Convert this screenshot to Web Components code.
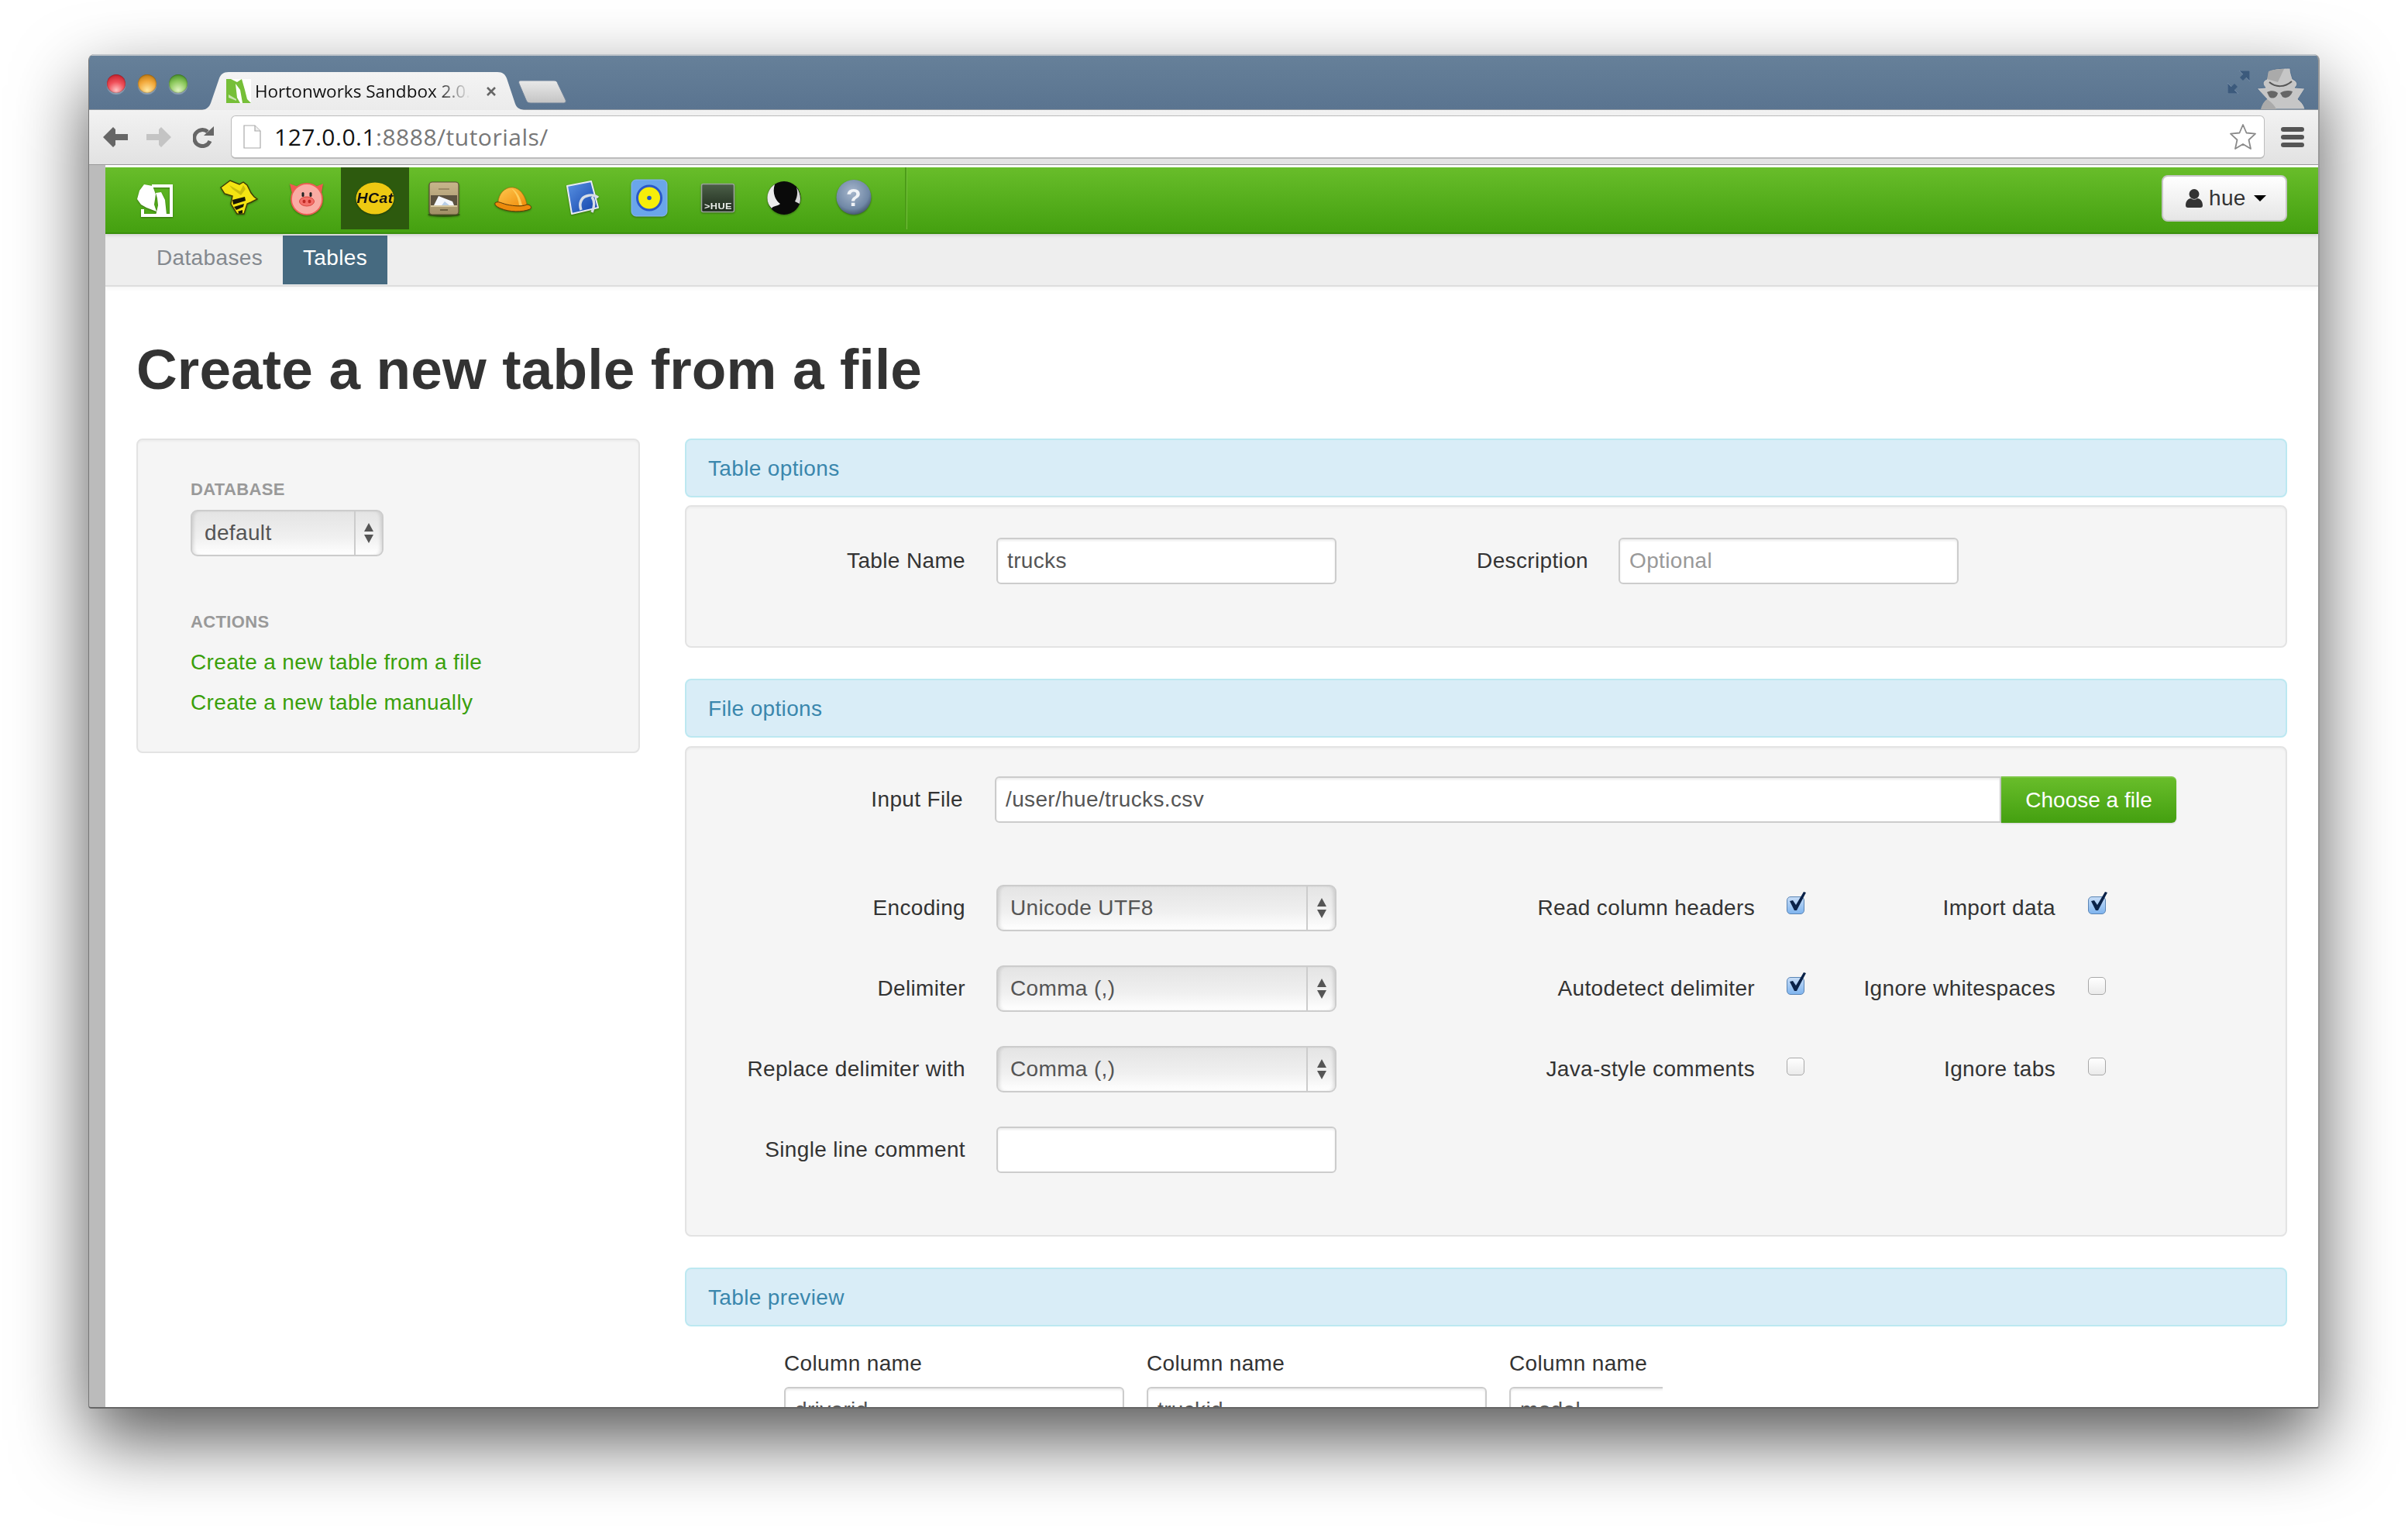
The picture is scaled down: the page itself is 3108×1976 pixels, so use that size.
<!DOCTYPE html>
<html>
<head>
<meta charset="utf-8">
<title>Hortonworks Sandbox 2.0</title>
<style>
    html, body { margin: 0; background: #fff; }
    body { box-sizing: border-box; min-height: 1976px; padding: 70px 114px; font-family: "Liberation Sans", Arial, sans-serif; font-size: 28px; letter-spacing: .35px; color: #333; }
</style>
</head>
<body>
<browser-window>
    <browser-tabstrip title="Hortonworks Sandbox 2.0."></browser-tabstrip>
    <browser-toolbar host="127.0.0.1" path=":8888/tutorials/"></browser-toolbar>
    <hue-page>
        <hue-navbar user="hue"></hue-navbar>
        <hue-subnav active="Tables"></hue-subnav>
        <create-table>
            <side-card slot="side"></side-card>
            <section-bar>Table options</section-bar>
            <well-panel class="first">
                <form-row>
                    <form-field label="Table Name"><hue-input value="trucks"></hue-input></form-field>
                    <form-field label="Description" label-width="325" gap="39"><hue-input placeholder="Optional"></hue-input></form-field>
                </form-row>
            </well-panel>
            <section-bar>File options</section-bar>
            <well-panel class="second">
                <form-row>
                    <form-field label="Input File" label-width="357" gap="41">
                        <file-picker value="/user/hue/trucks.csv"></file-picker>
                    </form-field>
                </form-row>
                <form-row style="margin-top:80px">
                    <form-field label="Encoding"><hue-select value="Unicode UTF8"></hue-select></form-field>
                    <check-field label="Read column headers" checked></check-field>
                    <check-field label="Import data" label-width="324" gap="42" checked></check-field>
                </form-row>
                <form-row style="margin-top:44px">
                    <form-field label="Delimiter"><hue-select value="Comma (,)"></hue-select></form-field>
                    <check-field label="Autodetect delimiter" checked></check-field>
                    <check-field label="Ignore whitespaces" label-width="324" gap="42"></check-field>
                </form-row>
                <form-row style="margin-top:44px">
                    <form-field label="Replace delimiter with"><hue-select value="Comma (,)"></hue-select></form-field>
                    <check-field label="Java-style comments"></check-field>
                    <check-field label="Ignore tabs" label-width="324" gap="42"></check-field>
                </form-row>
                <form-row style="margin-top:44px">
                    <form-field label="Single line comment"><hue-input></hue-input></form-field>
                </form-row>
            </well-panel>
            <section-bar>Table preview</section-bar>
            <table-preview></table-preview>
        </create-table>
    </hue-page>
</browser-window>

<script>
const ICONS = {
    logo: `<path fill="none" stroke="#fff" stroke-width="4" d="M40 24H65V62H28V54"/>
        <path fill="#fff" d="M21 41L24 30L30 22L41 24L45 35L43 48L46 57L33 52L26 48Z"/>
        <path fill="#fff" d="M45 33L52 32L57 42L59 61L45 62L48 49L47 40Z"/>`,
    hive: `<path fill="#f4e412" stroke="#3c3a06" stroke-width="1.400" d="M21 26L33 17L45 22L50 19L55 23L60 33L64 38L68 41L60 45L55 47L51 60L42 60L34 47L36 37L26 34Z"/>
        <path fill="#b8ac0c" d="M32 23L46 31L50 23L53 28L47 36L36 28Z" opacity=".7"/>
        <path fill="#161606" d="M36 42L52 38L53 43L37 48ZM38 51L51 47L50 51L41 55ZM43 57L49 55L49 59L45 60Z"/>`,
    pig: `<path fill="#ef5a50" d="M22 21L35 26H53L65 21L62 38H26Z"/>
        <circle cx="44" cy="41" r="20" fill="#f9aca4" stroke="#ee5e54" stroke-width="1.800"/>
        <ellipse cx="44" cy="44" rx="9.500" ry="6" fill="#f4706a" stroke="#d8443c"/>
        <ellipse cx="40.500" cy="44" rx="2" ry="2.300" fill="#c02a24"/><ellipse cx="47.500" cy="44" rx="2" ry="2.300" fill="#c02a24"/>
        <rect x="37.500" y="32" width="3" height="6" rx="1.500" fill="#222"/><rect x="47.500" y="32" width="3" height="6" rx="1.500" fill="#222"/>`,
    hcat: `<ellipse cx="44" cy="40" rx="24.500" ry="20.500" fill="#eec912"/>
        <text x="44" y="46" text-anchor="middle" font-family="Liberation Sans" font-weight="700" font-style="italic" font-size="18" textLength="47" lengthAdjust="spacingAndGlyphs" fill="#111">HCat</text>`,
    cabinet: `<defs><linearGradient id="c" x1="0" y1="0" x2="0" y2="1"><stop offset="0" stop-color="#c8b68c"/><stop offset="1" stop-color="#a08f66"/></linearGradient></defs>
        <ellipse cx="45" cy="61" rx="21" ry="3" fill="#2a3a10" opacity=".6"/>
        <rect x="26" y="19" width="38" height="42" rx="4" fill="url(#c)" stroke="#5a5034" stroke-width="1.200"/>
        <path stroke="#8c7d58" stroke-width="1.500" d="M38 28H52"/>
        <rect x="28" y="36" width="34" height="13" fill="#5c5240"/>
        <path fill="#f4f7fb" d="M32 49L38 37L56 44L58 49Z"/><path fill="#b8cee6" d="M42 49L46 44L52 49Z"/>
        <rect x="28" y="49" width="34" height="2" fill="#d6c8a0"/>
        <path stroke="#6c6040" stroke-width="2" d="M40 55H50"/>`,
    hat: `<defs><linearGradient id="h" x1="0" y1="0" x2="1" y2="1"><stop offset="0" stop-color="#ffc850"/><stop offset="1" stop-color="#f08c0a"/></linearGradient></defs>
        <path fill="url(#h)" stroke="#b87008" stroke-width=".7" d="M27 46C27 34 36 25 46 26C55 27 62 36 64 49L40 50Z"/>
        <path fill="#ffd86a" d="M44 27C52 31 56 40 58 49L54 49C53 40 50 33 44 27Z" opacity=".8"/>
        <path fill="#ec8a0c" stroke="#5a3a08" stroke-width="1" d="M23 46C27 43 30 46 38 48C48 50 58 51 64 48C69 48 71 52 68 54C58 58 42 58 30 53C25 51 22 48 23 46Z"/>`,
    oozie: `<defs><linearGradient id="o" x1="0" y1="0" x2="1" y2="1"><stop offset="0" stop-color="#5b94e4"/><stop offset="1" stop-color="#0f3fa8"/></linearGradient></defs>
        <path fill="url(#o)" stroke="#e8ecf2" stroke-width="2" stroke-linejoin="round" d="M28 24L59 18L68 52L34 60Z"/>
        <path fill="none" stroke="#d8dee6" stroke-width="3.500" d="M46 55C43 47 46 39 53 37C59 35 65 36 68 39M60 38C64 44 63 52 60 58"/>`,
    disc: `<rect x="23" y="16" width="46" height="47" rx="6" fill="#6aa6ea" stroke="#8ab8ee"/>
        <circle cx="46" cy="39.500" r="15.500" fill="#f6ee0a" stroke="#2a58c8" stroke-width="3"/>
        <circle cx="46" cy="39.500" r="2.800" fill="#2458c4"/>`,
    hue: `<defs><linearGradient id="t" x1="0" y1="0" x2="0" y2="1"><stop offset="0" stop-color="#4c5f48"/><stop offset="1" stop-color="#1d2a1c"/></linearGradient></defs>
        <rect x="25.500" y="21.500" width="42" height="36" rx="2" fill="url(#t)" stroke="#9aa39a" stroke-width="1.600"/>
        <text x="47" y="54" text-anchor="middle" font-family="Liberation Sans" font-weight="700" font-size="11" textLength="36" lengthAdjust="spacingAndGlyphs" fill="#e8ece8">&gt;HUE</text>`,
    head: `<circle cx="44" cy="39.500" r="21.500" fill="#0a0a0a"/>
        <path fill="#ececec" d="M22.500 38C23 31 27 25 32 22C29 31 31 41 39 47C35 51 30 49 28 53C24 49 22 44 22.500 38Z"/>
        <path fill="#d8d8d8" d="M60 26C65 32 66 41 64 47L58 44C61 39 62 32 60 26Z"/>`,
    help: `<defs><radialGradient id="g" cx=".45" cy=".35" r=".7"><stop offset="0" stop-color="#a6b6cc"/><stop offset=".7" stop-color="#7088a6"/><stop offset="1" stop-color="#3c4c62"/></radialGradient></defs>
        <circle cx="46" cy="38.500" r="22.500" fill="url(#g)"/>
        <text x="46" y="50" text-anchor="middle" font-family="Liberation Sans" font-weight="700" font-size="32" fill="#f0f3f7">?</text>`
};

class BrowserWindow extends HTMLElement {
    constructor() {
        super();
        this.attachShadow({ mode: 'open' });
    }

    connectedCallback() {
        this.shadowRoot.innerHTML = `
        <style>
            :host {
                display: flex;
                flex-direction: column;
                box-sizing: border-box;
                width: 2880px;
                height: 1748px;
                overflow: hidden;
                background: #bbb;
                border-left: 1px solid #777;
                border-right: 2px solid #999;
                border-bottom: 2px solid #666;
                border-radius: 8px 8px 4px 4px;
                box-shadow: 0 40px 94px rgba(0, 0, 0, .66);
            }
        </style>
        <slot></slot>
        `;
    }
}
customElements.define('browser-window', BrowserWindow);

class BrowserTabstrip extends HTMLElement {
    constructor() {
        super();
        this.attachShadow({ mode: 'open' });
    }

    connectedCallback() {
        const title = this.getAttribute('title') || '';
        this.shadowRoot.innerHTML = `
        <style>
            :host {
                display: flex;
                flex: none;
                height: 72px;
                box-sizing: border-box;
                padding-left: 23px;
                padding-right: 15px;
                background: linear-gradient(#668099, #5a7490);
                border-top: 2px solid #bdc3c9;
                border-bottom: 1px solid #8e97a0;
                font-family: "Open Sans", sans-serif;
                letter-spacing: 0;
            }
            .lights { display: flex; gap: 16px; margin-top: 24px; align-self: flex-start; }
            .lights i { display: block; width: 24px; height: 24px; border-radius: 50%; box-shadow: 0 2px 1px rgba(255,255,255,.3), inset 0 0 2px rgba(0,0,0,.5); }
            .red { background: radial-gradient(circle at 50% 85%, #ffc4c4, #f0505a 45%, #c01c28 90%); }
            .amber { background: radial-gradient(circle at 50% 85%, #ffe7a0, #f2a83a 50%, #b87510 90%); }
            .green { background: radial-gradient(circle at 50% 85%, #e0f4c0, #8cc85c 50%, #3f8a24 90%); }
            .tab {
                position: relative;
                align-self: flex-end;
                width: 415px;
                height: 49px;
                margin-left: 19px;
                margin-bottom: -1px;
                flex: none;
            }
            .tab svg.shape { position: absolute; left: 0; top: 0; }
            .fav { position: absolute; left: 31px; top: 9px; }
            .label {
                position: absolute;
                left: 68px;
                top: 8px;
                white-space: nowrap;
                font-size: 22.500px;
                line-height: 34px;
                color: #111;
                -webkit-mask-image: linear-gradient(to right, #000 84%, transparent 100%);
                mask-image: linear-gradient(to right, #000 84%, transparent 100%);
            }
            .close { position: absolute; left: 365px; top: 17px; }
            .newtab { margin-left: -7px; margin-top: 31px; flex: none; }
            .expand { margin-left: auto; margin-top: 19px; flex: none; align-self: flex-start; }
            .spy { margin-left: 8px; align-self: flex-end; flex: none; }
        </style>
        <div class="lights"><i class="red"></i><i class="amber"></i><i class="green"></i></div>
        <div class="tab">
            <svg class="shape" width="415" height="49" viewBox="0 0 415 49">
                <defs><linearGradient id="t" x1="0" y1="0" x2="0" y2="1"><stop offset="0" stop-color="#f4f4f4"/><stop offset="1" stop-color="#ebebeb"/></linearGradient></defs>
                <path fill="url(#t)" d="M0 49C6 48 9 45 11 40L22 8C24 3 27 0 34 0H381C388 0 391 3 393 8L404 41C406 46 409 48 415 49Z"/>
            </svg>
            <svg class="fav" width="32" height="31" viewBox="0 0 32 31">
                <rect width="32" height="31" fill="#fff"/>
                <path fill="#76bf38" d="M0 0H6L14 4L20 0L24 14L27 26L32 31H21L18 14L12 6L14 24L18 31H0Z"/>
                <path fill="#fff" d="M3 20L13 26L13 28L3 24Z" opacity=".6"/>
            </svg>
            <div class="label">${title}</div>
            <svg class="close" width="16" height="16" viewBox="0 0 16 16"><path d="M3 3L13 13M13 3L3 13" stroke="#666" stroke-width="2.600"/></svg>
        </div>
        <svg class="newtab" width="63" height="31" viewBox="0 0 63 31">
            <defs><linearGradient id="n" x1="0" y1="0" x2="0" y2="1"><stop offset="0" stop-color="#e9e9e9"/><stop offset="1" stop-color="#c4c4c4"/></linearGradient></defs>
            <path fill="url(#n)" stroke="#6d8098" d="M3 1H46C49 1 50 2 51 5L61 26C62 29 60 30 58 30H16C13 30 11 29 10 26L1 5C0 2 1 1 3 1Z"/>
        </svg>
        <svg class="expand" width="29" height="30" viewBox="0 0 29 30">
            <path fill="#3c5a7c" d="M15 0H29V14L24 9L20 13L16 9L20 5ZM0 16L5 21L9 17L13 21L9 25L14 30H0Z"/>
            <path fill="none" stroke="#7f97b0" stroke-width=".7" d="M20 5L15 0H29V14L24 9M9 25L14 30H0V16L5 21"/>
        </svg>
        <svg class="spy" width="65" height="55" viewBox="0 0 65 55">
            <path fill="#c6c6c6" stroke="#54708e" stroke-width="1" d="M16 6C24 2 36 2 44 2C44 8 46 12 47 16C53 19 55 23 50 27L63 28L54 42C59 46 62 50 63 55H6C7 50 10 45 14 42L1 28L12 27C7 22 9 18 14 16C15 12 15 9 16 6Z"/>
            <path fill="#aaa" d="M16 6C24 3 30 3 36 3L28 20L14 16C15 12 15 9 16 6ZM14 42C20 46 24 50 26 55H6C7 50 10 45 14 42Z"/>
            <path fill="none" stroke="#555" stroke-width="2" d="M17 20C25 27 37 27 46 19"/>
            <path fill="#666" d="M14 33C19 30 25 31 28 34C27 41 20 42 17 39ZM31 34C35 31 42 30 47 32C45 39 38 42 34 39Z"/>
        </svg>
        `;
    }
}
customElements.define('browser-tabstrip', BrowserTabstrip);

class BrowserToolbar extends HTMLElement {
    constructor() {
        super();
        this.attachShadow({ mode: 'open' });
    }

    connectedCallback() {
        const host = this.getAttribute('host') || '';
        const path = this.getAttribute('path') || '';
        this.shadowRoot.innerHTML = `
        <style>
            :host {
                display: flex;
                flex: none;
                align-items: center;
                box-sizing: border-box;
                height: 71px;
                padding: 0 18px 0 18px;
                background: linear-gradient(#f2f2f2, #e2e2e2);
                border-bottom: 1px solid #999;
                font-family: "Open Sans", sans-serif;
            }
            svg { flex: none; }
            .fwd { margin-left: 24px; }
            .reload { margin-left: 28px; }
            .omni {
                flex: 1;
                display: flex;
                align-items: center;
                box-sizing: border-box;
                height: 56px;
                margin-left: 22px;
                margin-right: 21px;
                padding: 0 9px 0 15px;
                background: #fff;
                border: 1px solid #bcbcbc;
                border-bottom-width: 2px;
                border-radius: 6px;
            }
            .url { margin-left: 17px; font-size: 30px; letter-spacing: .5px; color: #777; white-space: nowrap; }
            .url b { font-weight: 400; color: #111; }
            .star { margin-left: auto; }
        </style>
        <svg width="32" height="26" viewBox="0 0 32 26"><path fill="#666" d="M0 13L13 0L16 3V9H32V17H16V23L13 26Z"/></svg>
        <svg class="fwd" width="32" height="26" viewBox="0 0 32 26"><path fill="#c4c4c4" d="M32 13L19 0L16 3V9H0V17H16V23L19 26Z"/></svg>
        <svg class="reload" width="27" height="28" viewBox="0 0 27 28"><path fill="none" stroke="#666" stroke-width="5" d="M22 19A10.500 10.500 0 1 1 19 7"/><path fill="#666" d="M14 12H27V0Z"/></svg>
        <div class="omni">
            <svg width="23" height="31" viewBox="0 0 23 31"><path fill="#fff" stroke="#aaa" stroke-width="1.200" d="M1 1H15L22 8V30H1Z"/><path fill="#eee" stroke="#aaa" stroke-width="1.200" d="M15 1V8H22"/></svg>
            <span class="url"><b>${host}</b>${path}</span>
            <svg class="star" width="36" height="35" viewBox="0 0 36 35"><path fill="#fff" stroke="#8a8a8a" stroke-width="1.800" stroke-linejoin="round" d="M18 2L22.500 12.500L34 13.700L25.500 21.500L28 33L18 27L8 33L10.500 21.500L2 13.700L13.500 12.500Z"/></svg>
        </div>
        <svg width="30" height="26" viewBox="0 0 30 26"><g fill="#555"><rect width="30" height="6" rx="3"/><rect y="10" width="30" height="6" rx="3"/><rect y="20" width="30" height="6" rx="3"/></g></svg>
        `;
    }
}
customElements.define('browser-toolbar', BrowserToolbar);

class HuePage extends HTMLElement {
    constructor() {
        super();
        this.attachShadow({ mode: 'open' });
    }

    connectedCallback() {
        this.shadowRoot.innerHTML = `
        <style>
            :host {
                display: block;
                flex: 1;
                min-height: 0;
                overflow: hidden;
                margin-left: 21px;
                padding-top: 3px;
                background: #fff;
            }
        </style>
        <slot></slot>
        `;
    }
}
customElements.define('hue-page', HuePage);

class HueIcon extends HTMLElement {
    constructor() {
        super();
        this.attachShadow({ mode: 'open' });
    }

    connectedCallback() {
        const name = this.getAttribute('name');
        const width = this.getAttribute('width') || 88;
        this.shadowRoot.innerHTML = `
        <style>
            :host { display: block; flex: none; width: ${width}px; height: 80px; }
            :host([active]) { background: #2d5a0e; }
            svg { display: block; filter: drop-shadow(0 1px 1px rgba(0,0,0,.35)) blur(.4px); }
        </style>
        <svg width="${width}" height="80" viewBox="0 0 ${width} 80">${ICONS[name]}</svg>
        `;
    }
}
customElements.define('hue-icon', HueIcon);

class HueNavbar extends HTMLElement {
    constructor() {
        super();
        this.attachShadow({ mode: 'open' });
    }

    connectedCallback() {
        const user = this.getAttribute('user') || '';
        this.shadowRoot.innerHTML = `
        <style>
            :host {
                display: flex;
                box-sizing: border-box;
                height: 86px;
                padding-left: 20px;
                padding-right: 40px;
                background: linear-gradient(#68bd2a, #44a010);
                border-bottom: 2px solid #3a8f0c;
                position: relative;
                box-shadow: 0 2px 4px rgba(0,0,0,.12);
            }
            .sep {
                width: 2px;
                height: 80px;
                margin-left: 24px;
                background: #4c9c18;
                border-right: 1px solid #74c03c;
            }
            .user {
                margin-left: auto;
                margin-top: 10px;
                display: flex;
                align-items: center;
                box-sizing: border-box;
                width: 162px;
                height: 60px;
                padding-left: 29px;
                gap: 8px;
                background: linear-gradient(#fff, #e6e6e6);
                border: 2px solid #c6c6c6;
                border-radius: 8px;
                color: #333;
            }
            .caret { width: 0; height: 0; margin-left: 2px; border: 8px solid transparent; border-top-color: #000; border-bottom: 0; }
        </style>
        <hue-icon name="logo" width="108"></hue-icon>
        <hue-icon name="hive"></hue-icon>
        <hue-icon name="pig"></hue-icon>
        <hue-icon name="hcat" active></hue-icon>
        <hue-icon name="cabinet"></hue-icon>
        <hue-icon name="hat"></hue-icon>
        <hue-icon name="oozie"></hue-icon>
        <hue-icon name="disc"></hue-icon>
        <hue-icon name="hue"></hue-icon>
        <hue-icon name="head"></hue-icon>
        <hue-icon name="help"></hue-icon>
        <div class="sep"></div>
        <div class="user">
            <svg width="22" height="24" viewBox="0 0 22 24"><circle cx="11" cy="6.500" r="6.500" fill="#333"/><path fill="#333" d="M0 21C0 15 4 12 7 12C9 14 13 14 15 12C18 12 22 15 22 21C22 23 21 24 19 24H3C1 24 0 23 0 21Z"/></svg>
            <span>${user}</span>
            <span class="caret"></span>
        </div>
        `;
    }
}
customElements.define('hue-navbar', HueNavbar);

class HueSubnav extends HTMLElement {
    constructor() {
        super();
        this.attachShadow({ mode: 'open' });
    }

    connectedCallback() {
        this.shadowRoot.innerHTML = `
        <style>
            :host {
                display: flex;
                height: 66px;
                padding-left: 40px;
                background: #eee;
                border-bottom: 2px solid #ddd;
                box-shadow: 0 2px 6px rgba(0,0,0,.05);
            }
            a {
                display: block;
                box-sizing: border-box;
                height: 63px;
                margin-top: 2px;
                padding: 0 26px;
                line-height: 58px;
                color: #84898e;
            }
            a.on { background: #466a80; color: #fff; }
        </style>
        <a>Databases</a>
        <a class="on">Tables</a>
        `;
    }
}
customElements.define('hue-subnav', HueSubnav);

class CreateTable extends HTMLElement {
    constructor() {
        super();
        this.attachShadow({ mode: 'open' });
    }

    connectedCallback() {
        this.shadowRoot.innerHTML = `
        <style>
            :host { display: block; padding: 67px 40px 0; }
            h1 { margin: 0 0 49px; font-size: 73px; line-height: 80px; font-weight: 700; letter-spacing: .13px; color: #333; }
            .cols { display: grid; grid-template-columns: 650px 1fr; column-gap: 58px; align-items: start; }
        </style>
        <h1>Create a new table from a file</h1>
        <div class="cols">
            <slot name="side"></slot>
            <div><slot></slot></div>
        </div>
        `;
    }
}
customElements.define('create-table', CreateTable);

class SideCard extends HTMLElement {
    constructor() {
        super();
        this.attachShadow({ mode: 'open' });
    }

    connectedCallback() {
        this.shadowRoot.innerHTML = `
        <style>
            :host {
                display: block;
                box-sizing: border-box;
                height: 406px;
                padding: 49px 68px 0;
                background: #f5f5f5;
                border: 2px solid #e3e3e3;
                border-radius: 8px;
                box-shadow: inset 0 2px 2px rgba(0,0,0,.03);
            }
            h4 { margin: 0; font-size: 22px; line-height: 30px; font-weight: 700; color: #999; text-transform: uppercase; }
            hue-select { width: 249px; margin: 11px 0 70px; --arrow-w: 34px; }
            h4.actions { margin-bottom: 11px; }
            a { display: block; line-height: 52px; color: #3aa00c; }
        </style>
        <h4>Database</h4>
        <hue-select value="default"></hue-select>
        <h4 class="actions">Actions</h4>
        <a>Create a new table from a file</a>
        <a>Create a new table manually</a>
        `;
    }
}
customElements.define('side-card', SideCard);

class SectionBar extends HTMLElement {
    constructor() {
        super();
        this.attachShadow({ mode: 'open' });
    }

    connectedCallback() {
        this.shadowRoot.innerHTML = `
        <style>
            :host {
                display: flex;
                align-items: center;
                box-sizing: border-box;
                height: 76px;
                padding: 2px 0 0 28px;
                background: #d9edf7;
                border: 2px solid #bce8f1;
                border-radius: 8px;
                color: #3a87ad;
            }
        </style>
        <slot></slot>
        `;
    }
}
customElements.define('section-bar', SectionBar);

class WellPanel extends HTMLElement {
    constructor() {
        super();
        this.attachShadow({ mode: 'open' });
    }

    connectedCallback() {
        const first = this.classList.contains('first');
        this.shadowRoot.innerHTML = `
        <style>
            :host {
                display: block;
                box-sizing: border-box;
                height: ${first ? 184 : 633}px;
                margin-top: ${first ? 10 : 11}px;
                margin-bottom: 40px;
                padding-top: ${first ? 40 : 37}px;
                background: #f5f5f5;
                border: 2px solid #e3e3e3;
                border-radius: 8px;
                box-shadow: inset 0 2px 2px rgba(0,0,0,.03);
            }
        </style>
        <slot></slot>
        `;
    }
}
customElements.define('well-panel', WellPanel);

class FormRow extends HTMLElement {
    constructor() {
        super();
        this.attachShadow({ mode: 'open' });
    }

    connectedCallback() {
        this.shadowRoot.innerHTML = `
        <style>:host { display: flex; align-items: flex-start; }</style>
        <slot></slot>
        `;
    }
}
customElements.define('form-row', FormRow);

class FormField extends HTMLElement {
    constructor() {
        super();
        this.attachShadow({ mode: 'open' });
    }

    connectedCallback() {
        const label = this.getAttribute('label') || '';
        const labelWidth = this.getAttribute('label-width') || 360;
        const gap = this.getAttribute('gap') || 40;
        this.shadowRoot.innerHTML = `
        <style>
            :host { display: flex; align-items: center; flex: none; height: 60px; }
            label { flex: none; width: ${labelWidth}px; margin-right: ${gap}px; text-align: right; color: #333; white-space: nowrap; }
        </style>
        <label>${label}</label>
        <slot></slot>
        `;
    }
}
customElements.define('form-field', FormField);

class HueInput extends HTMLElement {
    constructor() {
        super();
        this.attachShadow({ mode: 'open' });
    }

    connectedCallback() {
        const value = this.getAttribute('value');
        const placeholder = this.getAttribute('placeholder');
        this.shadowRoot.innerHTML = `
        <style>
            :host {
                display: flex;
                align-items: center;
                box-sizing: border-box;
                width: var(--input-w, 439px);
                height: 60px;
                padding-left: 12px;
                background: #fff;
                border: 2px solid #ccc;
                border-radius: var(--input-r, 6px);
                box-shadow: inset 0 2px 3px rgba(0,0,0,.08);
                color: #555;
                white-space: nowrap;
                overflow: hidden;
            }
            .ph { color: #999; }
        </style>
        ${value ? `<span>${value}</span>` : ''}${placeholder ? `<span class="ph">${placeholder}</span>` : ''}
        `;
    }
}
customElements.define('hue-input', HueInput);

class HueSelect extends HTMLElement {
    constructor() {
        super();
        this.attachShadow({ mode: 'open' });
    }

    connectedCallback() {
        const value = this.getAttribute('value') || '';
        this.shadowRoot.innerHTML = `
        <style>
            :host {
                display: flex;
                align-items: stretch;
                box-sizing: border-box;
                width: 439px;
                height: 60px;
                background: linear-gradient(#e4e4e4, #f0f0f0 60%, #fff);
                border: 2px solid #ccc;
                border-radius: 9px;
                box-shadow: inset 4px 0 4px -2px rgba(0,0,0,.12), inset -4px 0 4px -2px rgba(0,0,0,.12);
                color: #555;
            }
            .val { flex: 1; display: flex; align-items: center; padding-left: 16px; }
            .arr {
                flex: none;
                width: var(--arrow-w, 35px);
                display: flex;
                align-items: center;
                justify-content: center;
                border-left: 2px solid #ccc;
            }
        </style>
        <div class="val">${value}</div>
        <div class="arr">
            <svg width="14" height="26" viewBox="0 0 14 26"><path fill="#555" d="M7 0L13 11H1ZM1 15H13L7 26Z"/></svg>
        </div>
        `;
    }
}
customElements.define('hue-select', HueSelect);

class FilePicker extends HTMLElement {
    constructor() {
        super();
        this.attachShadow({ mode: 'open' });
    }

    connectedCallback() {
        const value = this.getAttribute('value') || '';
        this.shadowRoot.innerHTML = `
        <style>
            :host { display: flex; }
            hue-input { --input-w: 1299px; --input-r: 6px 0 0 6px; }
            button {
                box-sizing: border-box;
                width: 226px;
                height: 60px;
                padding: 0;
                font: inherit;
                letter-spacing: 0;
                color: #fff;
                background: linear-gradient(#68bd2a, #44a010);
                border: 0;
                border-top: 2px solid #7cc644;
                border-radius: 0 6px 6px 0;
                box-shadow: 0 1px 2px rgba(0,0,0,.15);
            }
        </style>
        <hue-input value="${value}"></hue-input>
        <button>Choose a file</button>
        `;
    }
}
customElements.define('file-picker', FilePicker);

class CheckField extends HTMLElement {
    constructor() {
        super();
        this.attachShadow({ mode: 'open' });
    }

    connectedCallback() {
        const label = this.getAttribute('label') || '';
        const labelWidth = this.getAttribute('label-width') || 540;
        const gap = this.getAttribute('gap') || 41;
        const checked = this.hasAttribute('checked');
        this.shadowRoot.innerHTML = `
        <style>
            :host { display: flex; align-items: center; flex: none; height: 60px; }
            label { flex: none; width: ${labelWidth}px; margin-right: ${gap}px; text-align: right; color: #333; white-space: nowrap; }
            .box { position: relative; flex: none; box-sizing: border-box; width: 23px; height: 23px; margin-bottom: 8px;
                border: 1.500px solid #a8a8a8; border-radius: 5px; background: linear-gradient(#fff, #eaeaea); }
            .box.on { border-color: #5a85b5; background: linear-gradient(#c6dcf6, #7fb4ee); }
            svg { position: absolute; left: 1px; top: -7px; }
        </style>
        <label>${label}</label>
        <div class="box ${checked ? 'on' : ''}">
            ${checked ? '<svg width="26" height="26" viewBox="0 0 26 26"><path fill="#0a2248" d="M2 12L6 11L10 17L20 0L23 1L11 24H8Z"/></svg>' : ''}
        </div>
        `;
    }
}
customElements.define('check-field', CheckField);

class TablePreview extends HTMLElement {
    constructor() {
        super();
        this.attachShadow({ mode: 'open' });
    }

    connectedCallback() {
        const cols = ['driverid', 'truckid', 'model'];
        this.shadowRoot.innerHTML = `
        <style>
            :host { display: flex; gap: 29px; width: 1262px; padding-left: 128px; margin-top: -12px; overflow: hidden; box-sizing: border-box; padding-top: 40px; }
            .col { flex: none; width: 439px; }
            .name { line-height: 40px; margin-bottom: 10px; color: #333; }
        </style>
        ${cols.map(c => `
            <div class="col">
                <div class="name">Column name</div>
                <hue-input value="${c}"></hue-input>
            </div>`).join('')}
        `;
    }
}
customElements.define('table-preview', TablePreview);
</script>
</body>
</html>
